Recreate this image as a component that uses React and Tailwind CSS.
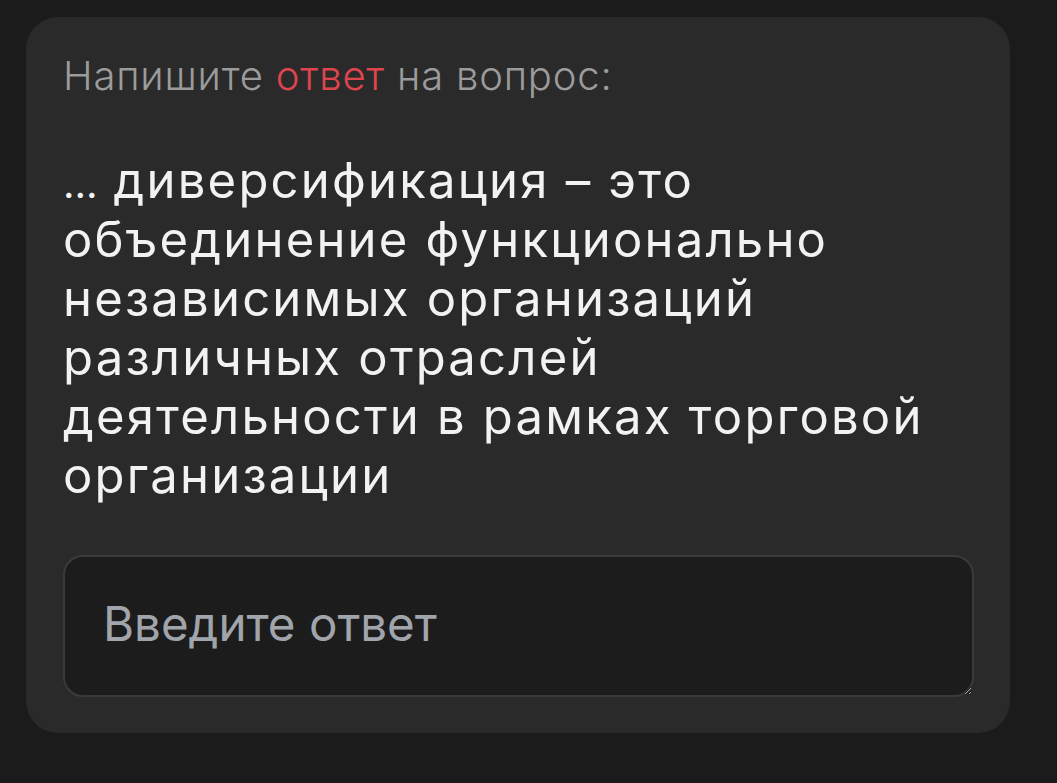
// Карточка вопроса с открытым ответом
export default function App() {
  return (
    <div className="min-h-[783px] bg-[#1b1b1b] px-[26px] pt-[17px] pb-[50px] font-['Inter',sans-serif]">
      <div className="w-[984px] rounded-[32px] bg-[#2a2a2a] px-[37px] pt-[35px] pb-[36px]">
        <p className="text-[40px] leading-[48px] font-light tracking-[0.02em] text-[#9b9b9b]">
          Напишите <span className="text-[#e0444e]">ответ</span> на вопрос:
        </p>

        <p className="mt-[51px] max-w-[880px] text-[49px] leading-[59px] tracking-[0.045em] text-[#f2f2f2]">
          <span className="text-[40px] leading-none tracking-normal">…</span> диверсификация – это объединение функционально независимых организаций различных отраслей деятельности в рамках торговой организации
        </p>

        <textarea
          placeholder="Введите ответ"
          className="mt-[50px] block h-[142px] w-[911px] resize-y rounded-[20px] border-2 border-[#3a3a3a] bg-[#1c1c1c] px-[38px] pt-[39px] text-[47.5px] leading-[56px] text-white placeholder:text-[#a0a4ab] outline-none"
        />
      </div>
    </div>
  )
}
